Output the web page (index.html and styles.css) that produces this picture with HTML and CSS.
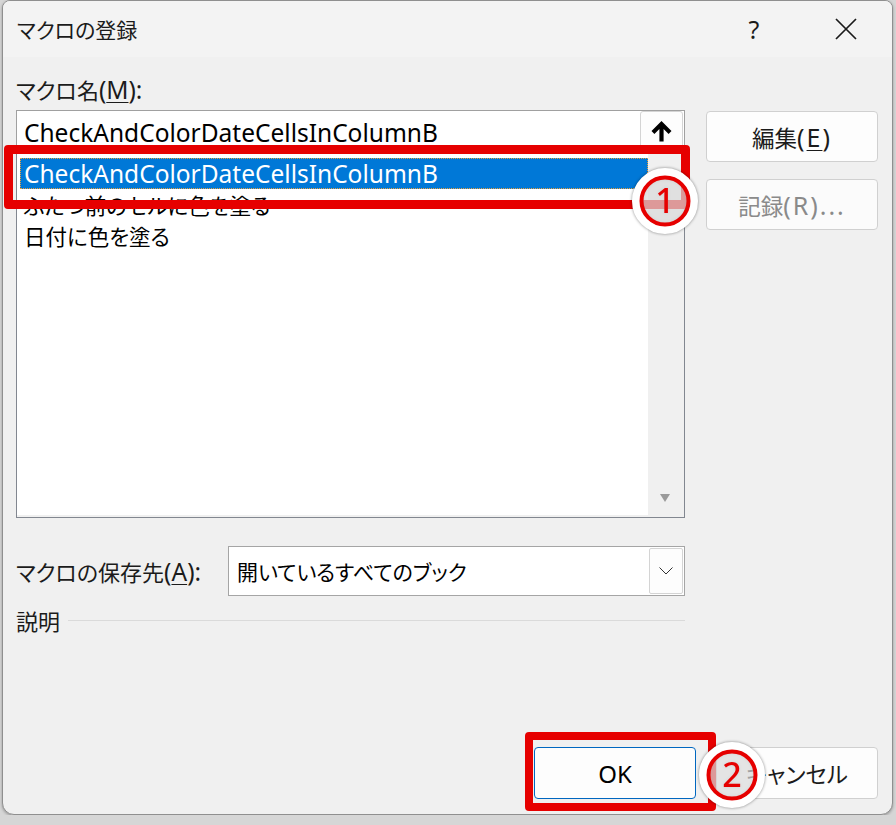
FILE: index.html
```html
<!DOCTYPE html>
<html lang="ja">
<head>
    <meta charset="UTF-8">
    <title>マクロの登録</title>
    <link rel="stylesheet" href="styles.css">
</head>
<body>

    <div class="dialog">
        <!-- Title bar -->
        <div class="titlebar">
            <span class="title">マクロの登録</span>
            <span class="tb-btn help">?</span>
            <span class="tb-btn close">
                <svg width="22" height="22" viewBox="0 0 22 22">
                    <path d="M1 1 L21 21 M21 1 L1 21" stroke="#1a1a1a" stroke-width="1.7" fill="none"/>
                </svg>
            </span>
        </div>

        <div class="content">
            <div class="top">
                <div class="left">
                    <div class="label">マクロ名<span class="en">(<u>M</u>):</span></div>

                    <!-- Macro name box -->
                    <div class="namebox">
                        <span class="en name">CheckAndColorDateCellsInColumnB</span>
                        <span class="upbtn">
                            <svg width="21" height="21" viewBox="0 0 21 21">
                                <path d="M10.5 0 L20.5 10 L17.6 12.9 L12.6 7.9 V20.5 H8.4 V7.9 L3.4 12.9 L0.5 10 Z" fill="#000"/>
                            </svg>
                        </span>
                    </div>

                    <!-- Macro list -->
                    <div class="list">
                        <div class="list-items">
                            <div class="item en selected">CheckAndColorDateCellsInColumnB</div>
                            <div class="item">ふたつ前のセルに色を塗る</div>
                            <div class="item">日付に色を塗る</div>
                        </div>
                        <div class="scrollbar"><span class="arrow-down"></span></div>
                    </div>
                </div>

                <div class="side">
                    <button class="btn">編集<span class="en">(<u>E</u>)</span></button>
                    <button class="btn" disabled>記録<span class="en">(R)...</span></button>
                </div>
            </div>

            <!-- Store in -->
            <div class="store">
                <span class="store-label">マクロの保存先<span class="en">(<u>A</u>):</span></span>
                <div class="combo">
                    <span class="combo-text">開いているすべてのブック</span>
                    <span class="dd">
                        <svg width="14" height="8" viewBox="0 0 14 8">
                            <path d="M0.5 0.5 L7 7 L13.5 0.5" stroke="#333" stroke-width="1" fill="none"/>
                        </svg>
                    </span>
                </div>
            </div>

            <div class="desc">説明<span class="rule"></span></div>

            <div class="actions">
                <button class="btn wide default"><span class="en">OK</span></button>
                <button class="btn wide">キャンセル</button>
            </div>
        </div>

        <!-- Annotations -->
        <div class="mark rect1"></div>
        <div class="mark rect2"></div>

        <svg class="badge badge1" width="70" height="70" viewBox="0 0 70 70">
            <circle cx="35" cy="35" r="29" fill="rgba(255,255,255,0.6)" stroke="#fff" stroke-width="8"/>
            <circle cx="35" cy="35" r="23.5" fill="none" stroke="#e60000" stroke-width="4"/>
            <text x="35" y="47" text-anchor="middle" class="badge-num">1</text>
        </svg>
        <svg class="badge badge2" width="70" height="70" viewBox="0 0 70 70">
            <circle cx="35" cy="35" r="29" fill="rgba(255,255,255,0.6)" stroke="#fff" stroke-width="8"/>
            <circle cx="35" cy="35" r="23.5" fill="none" stroke="#e60000" stroke-width="4"/>
            <text x="35" y="47" text-anchor="middle" class="badge-num">2</text>
        </svg>
    </div>

</body>
</html>
```

FILE: styles.css
```css
body {
    margin: 0;
    background-color: #d6d6d6;
    font-family: "Noto Sans CJK JP", sans-serif;
    font-feature-settings: "palt";
    color: #1b1b1b;
}
.en {
    font-family: "Noto Sans", "Noto Sans CJK JP", sans-serif;
    font-size: 24.5px;
    font-feature-settings: normal;
}
u {
    text-decoration-thickness: 1px;
    text-underline-offset: 3px;
}
.dialog {
    position: relative;
    box-sizing: border-box;
    width: 891px;
    height: 815px;
    margin-left: 2px;
    border: 1px solid #8f8f8f;
    border-radius: 8px 8px 12px 12px;
    background: #f0f0f0;
    box-shadow: 0 1px 3px rgba(0, 0, 0, 0.3);
    display: flex;
    flex-direction: column;
    overflow: hidden;
}
.titlebar {
    flex: none;
    height: 56px;
    display: flex;
    align-items: center;
    background: #f3f3f3;
    padding-left: 14px;
}
.title {
    flex: 1;
    font-size: 21px;
}
.tb-btn {
    width: 92px;
    height: 56px;
    display: flex;
    align-items: center;
    justify-content: center;
}
.help {
    font-family: "Noto Sans", sans-serif;
    font-size: 25px;
}
.content {
    flex: 1;
    display: flex;
    flex-direction: column;
    padding: 20px 14px 15px 13px;
}
.top {
    display: grid;
    grid-template-columns: 669px 172px;
    column-gap: 21px;
}
.label {
    height: 24px;
    line-height: 24px;
    margin-bottom: 9px;
    font-size: 22px;
    white-space: nowrap;
}
.namebox {
    box-sizing: border-box;
    height: 43px;
    border: 1px solid #a0a0a0;
    border-bottom: 0;
    background: #fff;
    display: flex;
    align-items: center;
    padding-left: 7px;
}
.name {
    flex: 1;
    color: #000;
}
.upbtn {
    align-self: flex-start;
    box-sizing: border-box;
    width: 43px;
    height: 41px;
    margin-right: 1px;
    border: 1px solid #d4d4d4;
    border-radius: 3px;
    background: #fdfdfd;
    display: flex;
    align-items: center;
    justify-content: center;
}
.list {
    box-sizing: border-box;
    height: 365px;
    border: 1px solid #828790;
    background: #f0f0f0;
    display: grid;
    grid-template-columns: 631px 1fr;
}
.list-items {
    box-sizing: border-box;
    height: 361px;
    background: #fff;
    padding: 4px 0 0 3px;
}
.item {
    height: 31px;
    line-height: 31px;
    padding-left: 4px;
    font-size: 21.5px;
    color: #000;
    white-space: nowrap;
}
.item.en {
    font-size: 24.5px;
}
.item.selected {
    background: #0078d7;
    color: #fff;
    outline: 1px dotted #e8a040;
    outline-offset: -1px;
}
.scrollbar {
    display: flex;
    align-items: flex-end;
    justify-content: center;
    padding: 0 3px 15px 0;
}
.arrow-down {
    width: 0;
    height: 0;
    border-left: 5.5px solid transparent;
    border-right: 5.5px solid transparent;
    border-top: 8px solid #9a9a9a;
}
.side {
    padding-top: 34px;
    display: flex;
    flex-direction: column;
    gap: 17px;
}
.btn {
    box-sizing: border-box;
    height: 51px;
    padding: 0;
    border: 1px solid #d0d0d0;
    border-radius: 4px;
    background: #fdfdfd;
    font-family: inherit;
    font-feature-settings: "palt";
    font-size: 22.5px;
    color: #1b1b1b;
    display: flex;
    align-items: center;
    justify-content: center;
}
.btn .en {
    font-size: 25px;
    letter-spacing: 2px;
}
.btn:disabled {
    color: #8a8a8a;
    background: #fbfbfb;
}
.store {
    width: 669px;
    display: flex;
    align-items: center;
    margin-top: 28px;
}
.store-label {
    flex: 1;
    font-size: 22px;
    white-space: nowrap;
}
.combo {
    box-sizing: border-box;
    width: 457px;
    height: 50px;
    border: 1px solid #a5a5a5;
    background: #fff;
    display: flex;
    align-items: center;
    padding-left: 8px;
}
.combo-text {
    flex: 1;
    font-size: 21px;
    color: #000;
}
.dd {
    box-sizing: border-box;
    width: 34px;
    height: 46px;
    margin-right: 1px;
    border: 1px solid #d4d4d4;
    border-radius: 2px;
    background: #fdfdfd;
    display: flex;
    align-items: center;
    justify-content: center;
}
.desc {
    width: 669px;
    height: 24px;
    line-height: 24px;
    margin-top: 12px;
    display: flex;
    align-items: center;
    gap: 8px;
    font-size: 22px;
}
.rule {
    flex: 1;
    height: 1px;
    background: #dadada;
}
.actions {
    margin-top: auto;
    display: flex;
    justify-content: flex-end;
    gap: 20px;
}
.btn.wide {
    width: 162px;
    height: 52px;
}
.btn.default {
    border-color: #0067c0;
}
.btn.default .en {
    font-size: 24px;
    letter-spacing: 0;
    color: #000;
}

/* red annotation marks */
.mark {
    position: absolute;
    box-sizing: border-box;
    border: 9px solid #e60000;
    border-radius: 4px;
}
.rect1 {
    left: 1px;
    top: 144px;
    width: 686px;
    height: 64px;
}
.rect2 {
    left: 522px;
    top: 731px;
    width: 191px;
    height: 79px;
    border-width: 8px;
}
.badge {
    position: absolute;
    filter: drop-shadow(0 0 1.5px rgba(0, 0, 0, 0.45));
}
.badge1 {
    left: 627px;
    top: 165px;
}
.badge2 {
    left: 694px;
    top: 739px;
}
.badge-num {
    font-family: "Noto Sans", sans-serif;
    font-size: 34px;
    font-weight: 500;
    fill: #e60000;
}
```
